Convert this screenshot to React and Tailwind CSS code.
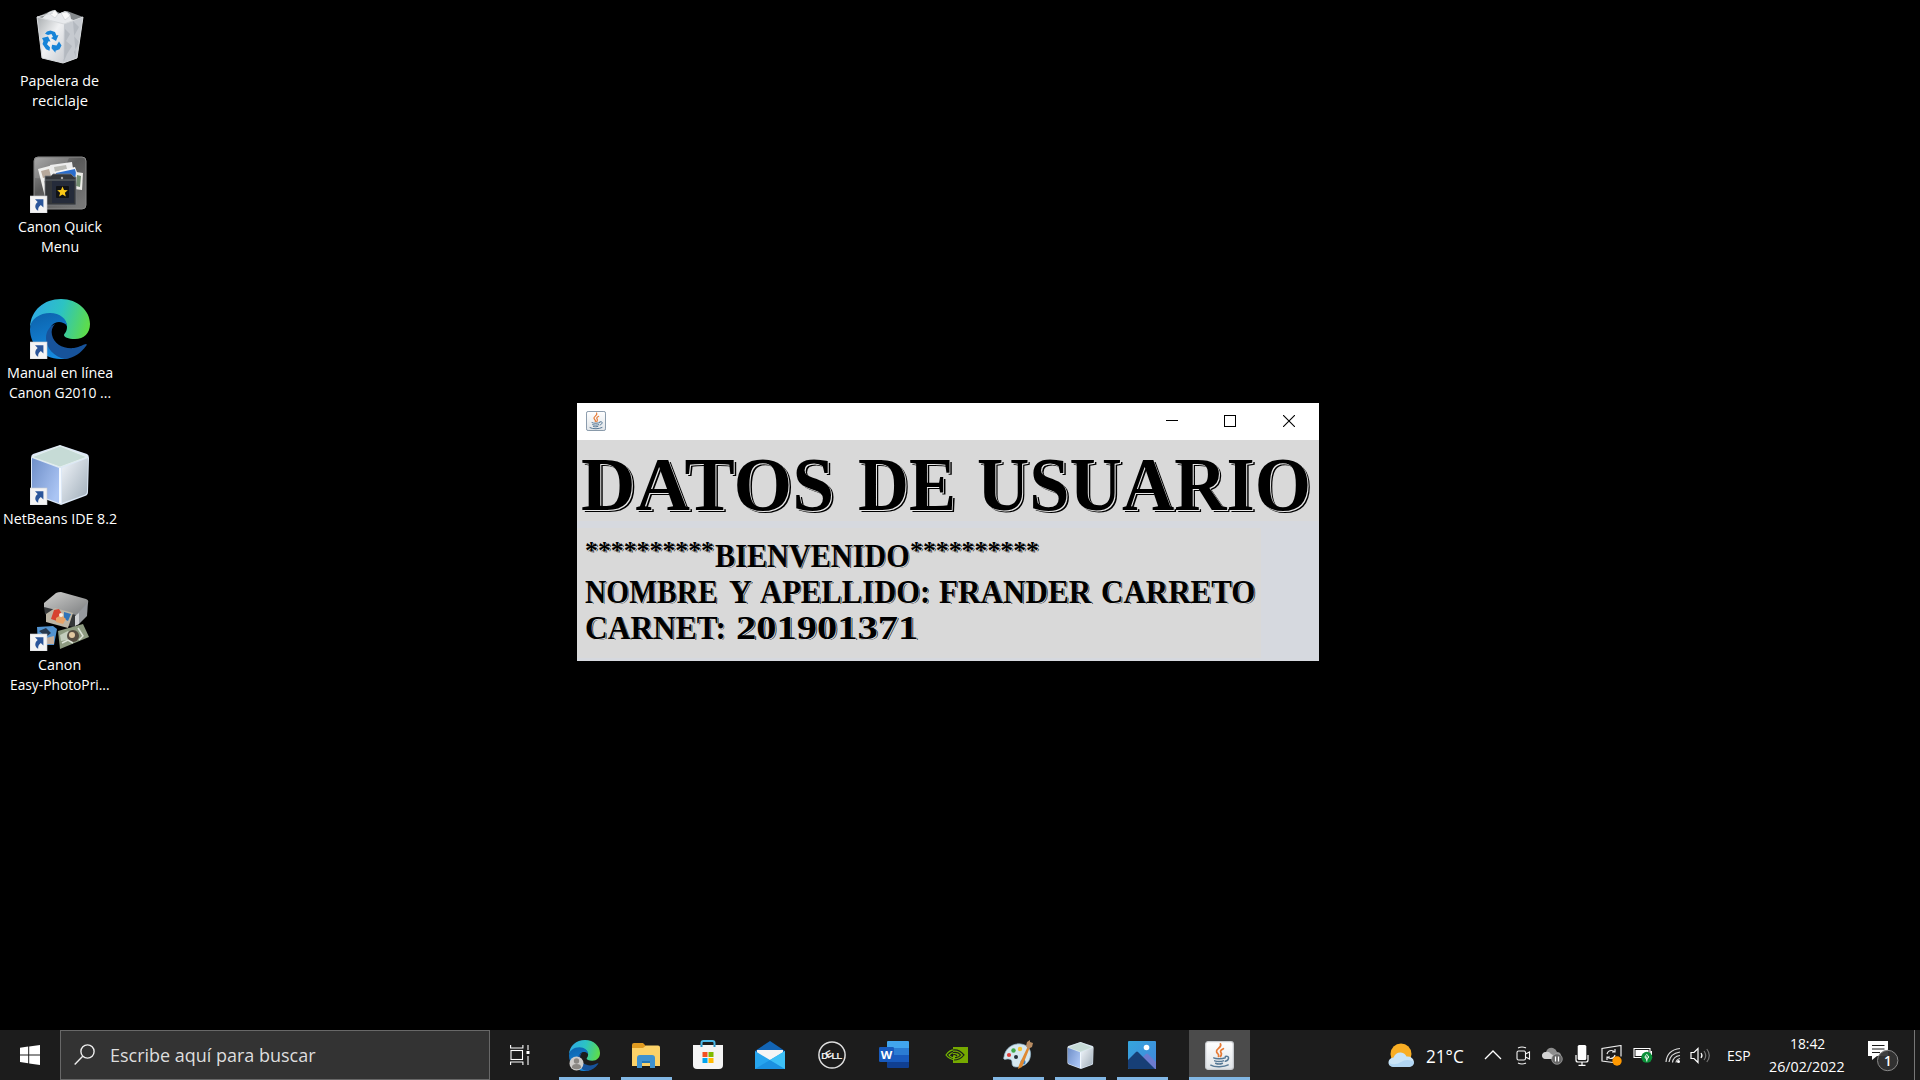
import React, { useLayoutEffect, useRef, useState } from "react";

/* Text stretched horizontally to occupy an exact width. */
function Fit({ w, className = "", children }) {
  const ref = useRef(null);
  const [k, setK] = useState(1);
  useLayoutEffect(() => {
    const measure = () => ref.current && setK(w / ref.current.offsetWidth);
    measure();
    document.fonts?.ready.then(measure);
  }, [w]);
  return (
    <span className={"block shrink-0 text-left " + className} style={{ width: w }}>
      <span ref={ref} className="inline-block origin-left whitespace-pre" style={{ transform: `scaleX(${k})` }}>
        {children}
      </span>
    </span>
  );
}

const Shortcut = () => (
  <g transform="translate(0 43)">
    <rect width="17" height="17" fill="#f4f4f4" stroke="#c9ccd2" strokeWidth=".6" />
    <path d="M5 3.200h8.400v8.200l-2.600-2.500c-2 1.500-2.900 3.100-2.600 5.900C4.300 12.200 4.600 8.500 7.700 5.900z" fill="#2b569a" />
  </g>
);

const RecycleBin = () => (
  <svg width="60" height="60" viewBox="0 0 60 60">
    <defs>
      <linearGradient id="binL" x1="0" x2="1" y2="1"><stop stopColor="#a9adb0" /><stop offset=".5" stopColor="#f0f1f3" /><stop offset="1" stopColor="#c9ccd1" /></linearGradient>
    </defs>
    <path d="M7 10 23 3l7 3 7-2 16 6-6 41-14 5-21-5z" fill="#85898c" />
    <path d="m11 12 8-7 6-2 3 4 7-3 5 3 1 5 7 3-5 32-11 6-19-4z" fill="#e8eaed" />
    <path d="m20 7 5-4 3 4-3 4zm11-1 6-1 3 4-5 4z" fill="#fafafa" stroke="#bfc3c7" strokeWidth=".5" />
    <path d="M7 10 34 17l-1 39-21-5z" fill="url(#binL)" />
    <path d="M34 17 53 10l-6 41-14 5z" fill="#c6cad0" />
    <path d="m35 22 5 5-4 7 6 5-5 8-3 7zM43 14l6 6-5 9 5 6-5 10 2 6" fill="#afb4bc" opacity=".8" />
    <path d="M7 10 23 6m30 4L34 17 7 10l5 41 21 5 14-5z" fill="none" stroke="#d7dadd" strokeWidth="1" />
    <g fill="#1784d8">
      <path d="M17 24.500 20.500 23.500 25 25l1.500 3.500 2-.5-2.500 6-5-3 2-1-1.500-3L18 28l-3-1.200z" />
      <path d="m12 31 6-1.500 2.500 5-2-.2-1.500 3 3 3-.5 3.500-3.500-1.500L12.500 37l1-3z" />
      <path d="m22 38 .5-.2 4 .7 2.500-4 2.500 4-2 3.700-4 1.500v2l-4-4.500z" />
    </g>
  </svg>
);

const QuickMenu = () => (
  <svg width="60" height="60" viewBox="0 0 60 60">
    <defs><linearGradient id="qm" x1="0" y1="0" x2=".8" y2="1"><stop stopColor="#9b9b9b" /><stop offset=".45" stopColor="#595959" /><stop offset="1" stopColor="#777" /></linearGradient></defs>
    <rect x="4" y="4" width="52" height="52" rx="4" fill="url(#qm)" stroke="#8b8b8b" />
    <path d="M5 25Q30 28 39 5H8q-3 0-3 3z" fill="#fff" opacity=".15" />
    <path d="m8 16 15-4 6 30-13 6z" fill="#efefed" />
    <path d="m11 18 8-2 2 7-8 2z" fill="#b7a99c" /><path d="m14 28 5-1 2 6-5 2z" fill="#aaa" />
    <path d="m20 12 22-3 2 13-20 4z" fill="#ececec" /><path d="m24 14 12-2 1 4-12 3z" fill="#babab5" />
    <path d="m24 19 21-5 6 16-21 5z" fill="#f7f7f7" /><path d="m26 20 19-4 2 8-20 5z" fill="#2a6dcc" />
    <path d="m46 19 7 1-1 17-8-1z" fill="#ecebe7" /><path d="m47 22 4 1-1 11-4-1z" fill="#718b6f" />
    <path d="M15 23h6l2-2h18l3 3h2v28H15z" fill="#33363a" stroke="#777a7e" strokeWidth=".8" />
    <rect x="22" y="28" width="22" height="22" fill="#252b3a" />
    <path d="M15 27h31" stroke="#60666d" /><circle cx="32" cy="25" r="1.200" fill="#aaa" />
    <rect x="26" y="33" width="13" height="12" rx="1" fill="#101215" />
    <path d="m32.500 33.500 1.500 3.500 3.800.3-2.900 2.400.9 3.800-3.300-2-3.300 2 .9-3.800-2.900-2.400 3.800-.3z" fill="#fac817" />
    <Shortcut />
  </svg>
);

function EdgeMark({ size, shortcut, id }) {
  return (
    <svg width={size} height={size} viewBox="0 0 60 60">
      <defs>
        <linearGradient id={id + "a"} x1="0" y1=".3" x2="1" y2=".5"><stop stopColor="#2fa8e6" /><stop offset=".5" stopColor="#2cc3c3" /><stop offset="1" stopColor="#5ddc4b" /></linearGradient>
        <linearGradient id={id + "b"} x1=".2" y1="0" x2=".5" y2="1"><stop stopColor="#0c63ad" /><stop offset="1" stopColor="#168be0" /></linearGradient>
      </defs>
      <path d="M0 28C1 11 14 0 31 0c17 0 29 12 29 25 0 9-6 15-15 15-7 0-11-2-11-4 0-1 3-3 3-8 0-6-6-12-15-12C11 16 2 21 0 28z" fill={`url(#${id}a)`} />
      <path d="M0 30C0 20 10 14 20 14c10 0 17 6 17 13-2-3-5-4-8-4-6 0-10 5-10 12 0 11 9 20 20 24-4 1-6 1-9 1C13 60 0 46 0 30z" fill={`url(#${id}b)`} />
      <path d="M25 25c-3 3-4 7-3 11 2 9 11 14 22 13 6-1 10-4 12-4 1 0 1 1 0 2-5 7-12 12-21 13C24 58 16 49 16 39c0-7 4-12 9-14z" fill="#17539b" />
      {shortcut && <Shortcut />}
    </svg>
  );
}

function Cube({ size, shortcut, id }) {
  return (
    <svg width={size} height={size} viewBox="0 0 60 60">
      <defs>
        <linearGradient id={id + "l"} x1="0" x2="1" y2=".7"><stop stopColor="#6f8fc8" /><stop offset="1" stopColor="#abc5f4" /></linearGradient>
        <linearGradient id={id + "r"} x1="0" x2="1" y2="1"><stop stopColor="#f1f5fa" /><stop offset="1" stopColor="#9eacb8" /></linearGradient>
      </defs>
      <path d="M30 0 57 9q2 1 2 4l-1 34q0 3-3 4L31 60 4 50q-3-1-3-4V13q0-3 2-4z" fill="#dce8f6" />
      <path d="m30 1 27 11-27 10L2 12z" fill="#c6dbd6" stroke="#e3eeee" />
      <path d="M2 13 29 23v35L5 49q-3-1-3-4z" fill={`url(#${id}l)`} />
      <path d="m32 23 26-10-1 33q0 3-3 4L32 58z" fill={`url(#${id}r)`} />
      <path d="M30 23v35" stroke="#f4f9ff" strokeWidth="2" />
      {shortcut && <Shortcut />}
    </svg>
  );
}

const Printer = () => (
  <svg width="60" height="60" viewBox="0 0 60 60">
    <defs><linearGradient id="prt" x1="0" x2="1" y2="1"><stop stopColor="#d0d0ce" /><stop offset="1" stopColor="#797b7d" /></linearGradient></defs>
    <g transform="translate(0 1)">
      <path d="m14 11 12-10q2-1 5-1l25 7q3 1 2 4L46 24 14 16z" fill="url(#prt)" />
      <path d="m14 15 32 8v13l-7-2-24-12z" fill="#343638" />
      <path d="m46 23 12-13-1 14-8 8-4 1z" fill="#96999e" /><path d="m45 24 4-3v11l-4 2z" fill="#cfd1d4" />
      <path d="m16 22 9-6 18 5-5 15-22-6z" fill="#bdb6a6" />
      <path d="m24 18 5-1 3 5-5 7-6-2z" fill="#d74330" /><path d="m34 20 7 2-3 7-4-2z" fill="#3274b8" />
      <path d="m26 26 5-3 5 4-3 5-7-2z" fill="#e7a368" /><circle cx="31" cy="23" r="2" fill="#f6eee4" />
      <path d="m7 35 16-1 4 3-3 16H8z" fill="#5293d0" /><path d="m9 39 7-3 5 5-5 4z" fill="#27394f" /><path d="m16 46 8-2v8h-8z" fill="#c5af9d" />
      <path d="m28 39 25-7 6 13-29 12z" fill="#8d9a80" /><path d="m30 43 8-4 4 3-5 6-6 1z" fill="#c3cdbd" />
      <circle cx="43" cy="44" r="6" fill="#554b40" /><circle cx="42" cy="43" r="3" fill="#e2c7a0" />
      <path d="m48 36 5 8-4 4m-17 3 6-3 5 3" fill="none" stroke="#dde3d7" strokeWidth="1.500" />
    </g>
    <Shortcut />
  </svg>
);

const desktop = [
  { icon: <RecycleBin />, lines: [["Papelera de", 79], ["reciclaje", 56]] },
  { icon: <QuickMenu />, lines: [["Canon Quick", 84], ["Menu", 38]] },
  { icon: <EdgeMark size={60} shortcut id="de" />, lines: [["Manual en línea", 106], ["Canon G2010 ...", 102]] },
  { icon: <Cube size={60} shortcut id="dc" />, lines: [["NetBeans IDE 8.2", 114]] },
  { icon: <Printer />, lines: [["Canon", 43], ["Easy-PhotoPri...", 100]] },
];

function JavaCup({ size }) {
  return (
    <svg width={size} height={size} viewBox="0 0 30 30">
      <defs><linearGradient id={"jv" + size} x1="0" x2="0" y2="1"><stop stopColor="#fff" /><stop offset="1" stopColor="#e0e4e8" /></linearGradient></defs>
      <rect x=".7" y=".7" width="28.600" height="28.600" rx="2.500" fill={`url(#jv${size})`} stroke={size < 24 ? "#75899c" : "#c9ccd0"} strokeWidth="1.300" />
      <g fill="none" strokeLinecap="round">
        <path d="M16 3c2 4-5 5-4 8 0 2 3 2 2 5M19 8c-4 2-3 3-2 5q0 2-1 3" stroke="#e77a35" strokeWidth="1.800" />
        <path d="M9 17.500c3 1.500 9 1 12-.2M10 20.500c3 1 6 1 9 0M11 23c2 1 5 1 7 0M21 16c5-1 4 4 0 5M6 25c4 2.500 14 2 18-.2" stroke="#567895" strokeWidth="1.500" />
      </g>
    </svg>
  );
}

function Row({ children }) {
  return <div className="flex h-9 items-start">{children}</div>;
}

function UserWindow() {
  return (
    <section className="absolute left-[577px] top-[403px] flex h-[258px] w-[742px] flex-col bg-[#d6d9df] text-black">
      <header className="flex h-[37px] shrink-0 items-center bg-white pb-[2px] pl-[9px]">
        <JavaCup size={20} />
        <div className="ml-auto flex">
          <div className="flex w-[58px] justify-center"><svg width="12" height="12"><path d="M0 5.500h12" stroke="#000" /></svg></div>
          <div className="flex w-[58px] justify-center"><svg width="12" height="12"><rect x=".5" y=".5" width="11" height="11" fill="none" stroke="#000" /></svg></div>
          <div className="flex w-[60px] justify-center"><svg width="12" height="12"><path d="m0 0 12 12M12 0 0 12" stroke="#000" strokeWidth="1.100" /></svg></div>
        </div>
      </header>
      <h1 className="flex h-[81px] shrink-0 bg-[#d9d9d9] pl-[4px] pt-[5px] font-['Liberation_Serif'] text-[77px] font-bold leading-[78px] [text-shadow:1px_1px_0_#e8e8e8,2.5px_2px_0_#000]">
        <Fit w={253}>DATOS</Fit>
        <Fit w={98} className="ml-[24px]">DE</Fit>
        <Fit w={334} className="ml-[21px]">USUARIO</Fit>
      </h1>
      <div className="mt-[7px] h-[130px] w-[684px] bg-[#d9d9d9] pl-[8px] pt-[10px] font-['Liberation_Serif'] text-[33px] font-bold leading-[36px] [text-shadow:0.5px_0.5px_0_#d9d9d9,1.2px_1px_0_#222]">
        <Row>
          <Fit w={129} className="text-[25px] leading-[26px]">**********</Fit>
          <Fit w={195} className="ml-px">BIENVENIDO</Fit>
          <Fit w={129} className="text-[25px] leading-[26px]">**********</Fit>
        </Row>
        <Row>
          <Fit w={133}>NOMBRE</Fit>
          <Fit w={23} className="ml-[11px]">Y</Fit>
          <Fit w={170} className="ml-[8px]">APELLIDO:</Fit>
          <Fit w={152} className="ml-[9px]">FRANDER</Fit>
          <Fit w={154} className="ml-[10px]">CARRETO</Fit>
        </Row>
        <Row>
          <Fit w={141}>CARNET:</Fit>
          <Fit w={183} className="ml-[10px]">201901371</Fit>
        </Row>
      </div>
    </section>
  );
}

const EdgeTask = () => (
  <div className="relative">
    <EdgeMark size={31} id="te" />
    <svg className="absolute bottom-0 left-0" width="15" height="15"><circle cx="7.500" cy="7.500" r="7" fill="#cfccca" /><circle cx="7.500" cy="5" r="2.700" fill="#8b8783" /><path d="M3 11q0-3 4.500-3t4.500 3v1q-4 2.500-9 0z" fill="#8b8783" /></svg>
  </div>
);
const Explorer = () => (
  <svg width="28" height="25" viewBox="0 0 28 25"><path d="M0 2q0-2 2-2h9l3 3v5H0z" fill="#e09b20" /><path d="M0 5h11l3-2.500h12q2 0 2 2V23H0z" fill="#fcd268" /><path d="M5 25V15q0-3 3-3h12q3 0 3 3v10h-5v-5q0-1-1-1h-6q-1 0-1 1v5z" fill="#3f92cf" /><path d="M10 18h8v2h-8z" fill="#2476b4" /></svg>
);
const Store = () => (
  <svg width="30" height="30" viewBox="0 0 30 30"><path d="M8.500 8V3q0-2 2-2h9q2 0 2 2v5" fill="none" stroke="#4bb8e8" strokeWidth="2" /><path d="M0 5h30v20q0 4-4 4H4q-4 0-4-4z" fill="#f4f4f4" /><path d="M8.500 5v2M21.500 5v2" stroke="#2395cc" strokeWidth="2" /><path d="M9.500 12h5v5h-5z" fill="#f25022" /><path d="M15.500 12h5v5h-5z" fill="#7fba00" /><path d="M9.500 18h5v5h-5z" fill="#00a4ef" /><path d="M15.500 18h5v5h-5z" fill="#ffb900" /></svg>
);
const Mail = () => (
  <svg width="30" height="28" viewBox="0 0 30 28"><path d="M0 10 15 0l15 10v4H0z" fill="#1264b4" /><path d="M2 9h26v8l-13 3-13-3z" fill="#f5f5f5" /><path d="m0 10 15 9 15-9v18H0z" fill="#27a5ee" /><path d="m0 28 15-9 15 9z" fill="#1b91e0" /><path d="m15 19 15-9v18z" fill="#3dc0f6" /></svg>
);
const Dell = () => (
  <svg width="28" height="28" viewBox="0 0 28 28"><circle cx="14" cy="14" r="13.100" fill="none" stroke="#dedede" strokeWidth="1.500" /><g fontFamily="Liberation Sans" fontWeight="700" fontSize="9.500" fill="#eee"><text x="3.300" y="17.500">D</text><text x="8.400" y="16" transform="rotate(-28 12 14)">E</text><text x="13.600" y="17.500">L</text><text x="18.600" y="17.500">L</text></g></svg>
);
const Word = () => (
  <svg width="30" height="28" viewBox="0 0 30 28"><path d="M8 1q0-1 1-1h20q1 0 1 1v6H8z" fill="#41a5ee" /><path d="M8 7h22v7H8z" fill="#2b7cd3" /><path d="M8 14h22v7H8z" fill="#185abd" /><path d="M8 21h22v5q0 1-1 1H9q-1 0-1-1z" fill="#103f91" /><rect y="6" width="15" height="15" rx="1.200" fill="#185abd" /><text x="1.800" y="17.500" textLength="11.500" lengthAdjust="spacingAndGlyphs" fontFamily="Open Sans" fontWeight="700" fontSize="11" fill="#fff">W</text></svg>
);
const Nvidia = () => (
  <svg width="23" height="16" viewBox="0 0 23 16"><path d="M8 0h15v16H8z" fill="#76a900" /><g fill="none" strokeWidth="1.200"><path d="M1 8Q5 2 11 3q5 1 8 5-3 5-9 5-6-1-9-5z" stroke="#76b900" /><path d="M8 3q6-1 11 5-4 5-10 5" stroke="#1c1c1c" /><path d="M4 8q3-3 7-2.500 3 .5 4.500 2.500-2 3-5 3Q6 11 4 8z" stroke="#76b900" /><path d="M8 5.500q5-1 7.500 2.500-2 3-5.500 2.500M8 8q1-1 3 0l1 1" stroke="#1c1c1c" /></g></svg>
);
const Paint = () => (
  <svg width="30" height="30" viewBox="0 0 30 30"><path d="M1 17C2 8 10 3 18 4c8 1 11 7 9 14-2 7-9 9-14 9-4 0-4-3-4-5 0-3-3-3-5-3-3 1-4 0-3-2z" fill="#d5e7ef" stroke="#8fb1c5" strokeWidth=".7" /><circle cx="6" cy="15" r="2.100" fill="#df3d38" /><circle cx="10.500" cy="10.500" r="2.200" fill="#42a94a" /><circle cx="17" cy="9" r="2.200" fill="#f5c337" /><circle cx="13" cy="17" r="2" fill="#26313a" /><circle cx="20" cy="22" r="2.500" fill="#3483ce" /><path d="m25 6 2 1-8 20-4 2 1-4z" fill="#df8932" /><path d="m23 6 1-4 3-2v2l3 1-1 4-4 2z" fill="#b88c62" /></svg>
);
const Photos = () => (
  <svg width="28" height="28" viewBox="0 0 28 28"><defs><linearGradient id="ph" x2="1" y2="1"><stop stopColor="#35a6dd" /><stop offset="1" stopColor="#4286db" /></linearGradient></defs><rect width="28" height="28" rx="1" fill="url(#ph)" /><path d="m13 18 5-5q1-1 2 0l8 8v7H15z" fill="#6c7bcf" /><path d="m0 19 8-8q1-1 2 0l17 17H1q-1 0-1-1z" fill="#173f76" /><circle cx="18.500" cy="6.500" r="2.800" fill="#fff" /></svg>
);

const tasks = [
  { name: "edge", icon: <EdgeTask />, open: true },
  { name: "explorer", icon: <Explorer />, open: true },
  { name: "store", icon: <Store /> },
  { name: "mail", icon: <Mail /> },
  { name: "dell", icon: <Dell /> },
  { name: "word", icon: <Word /> },
  { name: "nvidia", icon: <Nvidia /> },
  { name: "paint", icon: <Paint />, open: true },
  { name: "netbeans", icon: <Cube size={27} id="tc" />, open: true },
  { name: "photos", icon: <Photos />, open: true },
];

const Slot = ({ w, children }) => (
  <div className="flex shrink-0 items-center justify-center" style={{ width: w }}>{children}</div>
);

function Tray() {
  return (
    <div className="ml-auto flex h-full items-stretch">
      <Slot w={28}>
        <svg width="27" height="25" viewBox="0 0 27 25"><circle cx="13" cy="11" r="10.500" fill="#f9ae24" /><path d="M5 24q-5-1-4.500-5 .5-4 5-4.500Q8 9 13 9.500q4 .5 5.500 4Q25 13 26 19q0 4-4.500 5z" fill="#c9e4f7" /><path d="M1 20q6 3 12-1t13 0q0 4-4.500 5H5q-4-1-4-4z" fill="#a6d0f1" opacity=".7" /></svg>
      </Slot>
      <div className="ml-[11px] flex items-center pt-[2px] text-[18px]"><Fit w={38}>21°C</Fit></div>
      <div className="ml-[16px] flex">
        <Slot w={26}><svg width="18" height="10"><path d="m1 9 8-8 8 8" fill="none" stroke="#fff" strokeWidth="1.300" /></svg></Slot>
      </div>
      <div className="ml-[7px] flex">
        <Slot w={20}><svg width="15" height="19" fill="none" stroke="#f5f5f5" strokeWidth="1.100"><rect x="1" y="5" width="8.500" height="9" rx="1.500" /><path d="m9.500 8 4-2v7l-4-2M2 2q4-2 8 0M2 17q4 2 8 0" /></svg></Slot>
        <Slot w={38}><svg width="21" height="20" viewBox="0 0 21 20"><path d="M4 14q-4 0-4-4 1-3 4-3Q6 2 11 3q3 1 4 4 4 0 4 4t-4 3z" fill="#8d8d8d" /><path d="M4 14q-4 0-4-4 1-3 4-3 3-1 5 2l6 3-1 2z" fill="#d4d4d4" /><circle cx="15" cy="14" r="5.300" fill="#666" stroke="#aaa" strokeWidth=".7" /><path d="M13.500 11.500v5m3-5v5" stroke="#fff" strokeWidth="1.200" /></svg></Slot>
        <Slot w={22}><svg width="14" height="21"><rect x="2.700" y="0" width="8.600" height="15" rx="1.500" fill="#fff" /><path d="M1 10v5q0 2 2 2h8q2 0 2-2v-5M7 17v3M3.500 20.400h7" fill="none" stroke="#fff" strokeWidth="1.200" /></svg></Slot>
        <Slot w={38}><svg width="22" height="21" fill="none" stroke="#eee" strokeWidth="1.200"><path d="M12 17.500 1 16V3.500l19-3v11M6 9q1-3.500 4.500-3.500 2 0 3 1.500M11 7h3V4M14 10q-1 3.500-4.500 3.500-2 0-3-1.500M9 12H6v3" /><circle cx="16" cy="16" r="4.700" fill="#ff9800" stroke="none" /></svg></Slot>
        <Slot w={24}><svg width="20" height="16" viewBox="0 0 20 16"><path d="M1 1.500h16v9H1z" fill="none" stroke="#fff" strokeWidth="1.100" /><path d="M2.500 3h13v6h-13zM17.500 4H19v4h-1.500z" fill="#fff" /><circle cx="13.800" cy="10.300" r="5.500" fill="#0b9139" /><path d="M13.800 7.500q3.500 2.500 0 5-3.500-2.500 0-5zm0 2V14.500" fill="none" stroke="#fff" /></svg></Slot>
        <Slot w={35}><svg width="18" height="17" fill="none" stroke="#ddd" strokeWidth="1.200"><path d="M2 15Q3 3 16 1.500M5 15Q6 6.500 16 5M8.500 15.500q.5-6 7.500-7M12 15.500q.3-3 4-4" /><circle cx="14.500" cy="14.500" r="1.500" fill="#fff" stroke="none" /></svg></Slot>
        <Slot w={21}><svg width="21" height="17" fill="none" stroke="#fff" strokeWidth="1.200"><path d="M1 5.500h3l4-4v14l-4-4H1z" /><path d="M11 6q2 2.500 0 5" /><path d="M14 4q3.500 4.500 0 9M16.800 2q5 6.500 0 13" stroke="#777" /></svg></Slot>
      </div>
      <div className="ml-[16px] flex items-center pt-[1px] text-[15px]"><Fit w={24}>ESP</Fit></div>
      <div className="ml-[17px] flex w-[78px] flex-col items-center pt-[2px] text-[15px] leading-[23px]">
        <Fit w={35}>18:42</Fit>
        <Fit w={76}>26/02/2022</Fit>
      </div>
      <div className="ml-[22px] flex w-[32px] items-center pt-[2px]">
        <svg width="31" height="32" viewBox="0 0 31 32"><path d="M0 1h20v15H9l-5 4v-4H0z" fill="#fff" /><path d="M4 5.500h12.500M4 9h12.500M4 12.500h8" stroke="#1c1c1c" strokeWidth="1.100" /><circle cx="19.700" cy="20.500" r="10.200" fill="#333" stroke="#8a8a8a" fillOpacity=".94" /><text x="16" y="25.500" fontFamily="Open Sans" fontSize="13.500" fontWeight="600" fill="#fff">1</text></svg>
      </div>
      <div className="ml-[14px] w-[6px] border-l border-[#777]" />
    </div>
  );
}

function Taskbar() {
  return (
    <footer className="flex h-[50px] w-full shrink-0 items-stretch bg-[#1c1c1c] text-white">
      <Slot w={60}><svg width="20" height="20" fill="#fff"><path d="M0 2.800 8.200 1.600v7.800H0zM9.200 1.500 20 0v9.400H9.200zM0 10.400h8.200v7.900L0 17.100zM9.200 10.400H20V20L9.200 18.500z" /></svg></Slot>
      <div className="flex w-[430px] shrink-0 items-center border border-[#686868] bg-[#333] pl-[13px]">
        <svg width="22" height="22" fill="none" stroke="#eee" strokeWidth="1.400"><circle cx="13.500" cy="7.500" r="6.600" /><path d="M8.700 12.300.7 20.500" /></svg>
        <div className="ml-[14px] pb-[1px] text-[18.500px] text-[#dedede]"><Fit w={206}>Escribe aquí para buscar</Fit></div>
      </div>
      <div className="flex w-[63px] shrink-0 items-center justify-center pr-[4px]">
        <svg width="20" height="20" fill="none" stroke="#fff" strokeWidth="1.100"><rect x="1" y="5.500" width="11.500" height="9" /><path d="M.6 0v3h12.300V0M.6 20v-3h12.300v3M18 0v5M18 11v9" /><path d="M16.500 6h3v3h-3z" fill="#fff" stroke="none" /></svg>
      </div>
      <nav className="flex">
        {tasks.map((t) => (
          <div key={t.name} className="flex w-[62px] flex-col items-center">
            <div className="flex h-[47px] w-full items-center justify-center pt-[3px]">{t.icon}</div>
            {t.open && <div className="h-[3px] w-[51px] bg-[#82b7e4]" />}
          </div>
        ))}
        <div className="ml-[16px] flex w-[61px] flex-col bg-[#4b4b4b]">
          <div className="flex h-[47px] items-center justify-center pr-px pt-[3px]"><JavaCup size={29} /></div>
          <div className="h-[3px] bg-[#82b7e4]" />
        </div>
      </nav>
      <Tray />
    </footer>
  );
}

export default function App() {
  return (
    <div className="relative flex h-[1080px] w-[1920px] flex-col overflow-hidden bg-black font-['Open_Sans',sans-serif]">
      <main className="flex grow flex-col">
        {desktop.map((d) => (
          <div key={d.lines[0][0]} className="flex h-[146px] w-[120px] flex-col items-center pt-[7px]">
            {d.icon}
            <div className="mt-[3px] flex flex-col items-center pr-px text-[15px] leading-[20px] text-white">
              {d.lines.map(([text, w]) => <Fit key={text} w={w}>{text}</Fit>)}
            </div>
          </div>
        ))}
      </main>
      <UserWindow />
      <Taskbar />
    </div>
  );
}
